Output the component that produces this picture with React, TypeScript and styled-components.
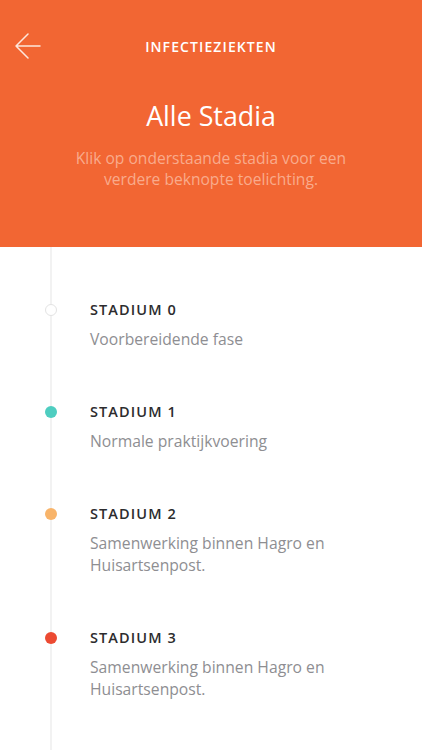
import React from 'react';
import styled, { createGlobalStyle } from 'styled-components';

const GlobalStyle = createGlobalStyle`
  html, body {
    margin: 0;
    padding: 0;
    background: #ffffff;
    font-family: 'Open Sans', 'Noto Sans', sans-serif;
  }
  * { box-sizing: border-box; }
`;

const Page = styled.div`
  width: 422px;
  min-height: 750px;
  display: flex;
  flex-direction: column;
  background: #ffffff;
  overflow: hidden;
`;

const Header = styled.header`
  background: #f26633;
  padding: 26px 0 57px;
  display: flex;
  flex-direction: column;
  align-items: center;
`;

const TopBar = styled.div`
  width: 100%;
  height: 40px;
  display: grid;
  grid-template-columns: 56px 1fr 56px;
  align-items: center;
`;

const BackButton = styled.button`
  background: none;
  border: 0;
  padding: 0 0 0 15px;
  height: 40px;
  display: flex;
  align-items: center;
  cursor: pointer;
`;

const BarTitle = styled.h2`
  margin: 0;
  text-align: center;
  color: #ffffff;
  font-size: 14px;
  font-weight: 600;
  letter-spacing: 1.1px;
`;

const Title = styled.h1`
  margin: 33px 0 0;
  color: #ffffff;
  font-size: 26.8px;
  line-height: 34px;
  font-weight: 400;
`;

const Subtitle = styled.p`
  margin: 15px 0 0;
  max-width: 310px;
  text-align: center;
  color: #f9ab8c;
  font-size: 15.6px;
  line-height: 21px;
`;

const Timeline = styled.ol`
  list-style: none;
  flex: 1;
  margin: 0 0 0 50px;
  padding: 53px 0 0 38px;
  border-left: 2px solid #f2f2f2;
`;

const Item = styled.li`
  position: relative;
  margin-bottom: 52px;
`;

const Dot = styled.span<{ $color?: string }>`
  position: absolute;
  left: -45px;
  top: 4px;
  width: 12px;
  height: 12px;
  border-radius: 50%;
  background: ${p => p.$color ?? '#ffffff'};
  border: ${p => (p.$color ? 'none' : '1px solid #e3e3e3')};
`;

const Label = styled.div`
  color: #2c2c2e;
  font-size: 14.5px;
  line-height: 20px;
  font-weight: 600;
  letter-spacing: 1.1px;
`;

const Description = styled.div`
  margin-top: 8px;
  color: #8e8e92;
  font-size: 15.7px;
  line-height: 22px;
  max-width: 270px;
`;

const stages = [
  { label: 'STADIUM 0', text: 'Voorbereidende fase' },
  { label: 'STADIUM 1', text: 'Normale praktijkvoering', color: '#4ecdc0' },
  { label: 'STADIUM 2', text: 'Samenwerking binnen Hagro en Huisartsenpost.', color: '#f8b46a' },
  { label: 'STADIUM 3', text: 'Samenwerking binnen Hagro en Huisartsenpost.', color: '#ec4a32' },
];

const BackArrow = () => (
  <svg width="26" height="26" viewBox="0 0 26 26" fill="none">
    <path d="M13 1 L1 13 L13 25 M1 13 H25" stroke="#fde7dc" strokeWidth="1.5" strokeLinecap="round" strokeLinejoin="round" />
  </svg>
);

export default function App() {
  return (
    <>
      <GlobalStyle />
      <Page>
        <Header>
          <TopBar>
            <BackButton aria-label="Terug">
              <BackArrow />
            </BackButton>
            <BarTitle>INFECTIEZIEKTEN</BarTitle>
            <span />
          </TopBar>
          <Title>Alle Stadia</Title>
          <Subtitle>Klik op onderstaande stadia voor een verdere beknopte toelichting.</Subtitle>
        </Header>
        <Timeline>
          {stages.map(s => (
            <Item key={s.label}>
              <Dot $color={s.color} />
              <Label>{s.label}</Label>
              <Description>{s.text}</Description>
            </Item>
          ))}
        </Timeline>
      </Page>
    </>
  );
}
